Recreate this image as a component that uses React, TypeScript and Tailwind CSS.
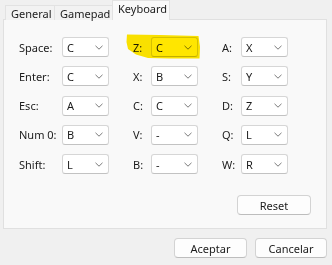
import React from 'react'

const rows: [string, string, string, string, string, string][] = [
  ['Space:', 'C', 'Z:', 'C', 'A:', 'X'],
  ['Enter:', 'C', 'X:', 'B', 'S:', 'Y'],
  ['Esc:', 'A', 'C:', 'C', 'D:', 'Z'],
  ['Num 0:', 'B', 'V:', '-', 'Q:', 'L'],
  ['Shift:', 'L', 'B:', '-', 'W:', 'R'],
]

const Select = ({ value }: { value: string }) => (
  <div className="w-[47px] h-[20px] bg-white border border-[#d6d6d6] border-b-[#c2c2c2] rounded-[3px] flex items-center justify-between pl-[4px] pr-[5px]">
    <span>{value}</span>
    <svg width="8" height="5" viewBox="0 0 8 5" fill="none">
      <path d="M0.5 0.8 L4 4.2 L7.5 0.8" stroke="#6b6b6b" strokeWidth="0.9" />
    </svg>
  </div>
)

const Button = ({ label, className }: { label: string; className: string }) => (
  <div
    className={
      'h-[20px] bg-[#fdfdfd] border border-[#d3d3d3] border-b-[#bdbdbd] rounded-[4px] flex items-center justify-center ' +
      className
    }
  >
    {label}
  </div>
)

export default function App() {
  return (
    <div className="relative w-[332px] h-[265px] bg-[#f0f0f0] flex flex-col font-['Noto_Sans',Arial,sans-serif] text-[11px] leading-none text-[#1b1b1b]">
      {/* Tabs */}
      <div className="h-[20px] flex items-end pl-[5px] relative z-10">
        <div className="w-[49px] h-[15px] border-l border-t border-[#e2e2e2] bg-[#f2f2f2] pl-[5px] flex items-center">
          General
        </div>
        <div className="w-[58px] h-[15px] border-l border-t border-[#e2e2e2] bg-[#f2f2f2] pl-[5px] flex items-center">
          Gamepad
        </div>
        <div className="w-[58px] h-[20px] border-l border-t border-r border-[#e2e2e2] bg-[#f9f9f9] pl-[5px] pb-[5px] flex items-center self-stretch">
          Keyboard
        </div>
      </div>

      {/* Panel */}
      <div className="-mt-[1px] ml-[3px] w-[324px] h-[210px] border border-[#e0e0e0] bg-[#f9f9f9] flex flex-col pt-[17px] pl-[15px]">
        <div className="flex flex-col gap-[9.25px]">
          {rows.map((r) => (
            <div key={r[0]} className="flex items-center h-[20px]">
              <div className="w-[43px]">{r[0]}</div>
              <Select value={r[1]} />
              <div className="w-[42px] pl-[24px]">{r[2]}</div>
              <Select value={r[3]} />
              <div className="w-[43px] pl-[24px]">{r[4]}</div>
              <Select value={r[5]} />
            </div>
          ))}
        </div>
        <div className="flex justify-end mt-[21px] mr-[15px]">
          <Button label="Reset" className="w-[74px]" />
        </div>
      </div>

      {/* Dialog buttons */}
      <div className="flex justify-end gap-[8px] mt-[9px] pr-[5px]">
        <Button label="Aceptar" className="w-[73px]" />
        <Button label="Cancelar" className="w-[72px]" />
      </div>

      {/* Yellow marker highlight */}
      <svg
        className="absolute left-0 top-0 pointer-events-none mix-blend-multiply"
        width="332"
        height="265"
        viewBox="0 0 332 265"
      >
        <path
          d="M127 34.5 L160 35 L198.5 36 L200 47 L199.5 58.5 L170 58.5 L148 58 L136 54.5 L128 49 L126.5 42 Z"
          fill="#ffe600"
        />
      </svg>
    </div>
  )
}
